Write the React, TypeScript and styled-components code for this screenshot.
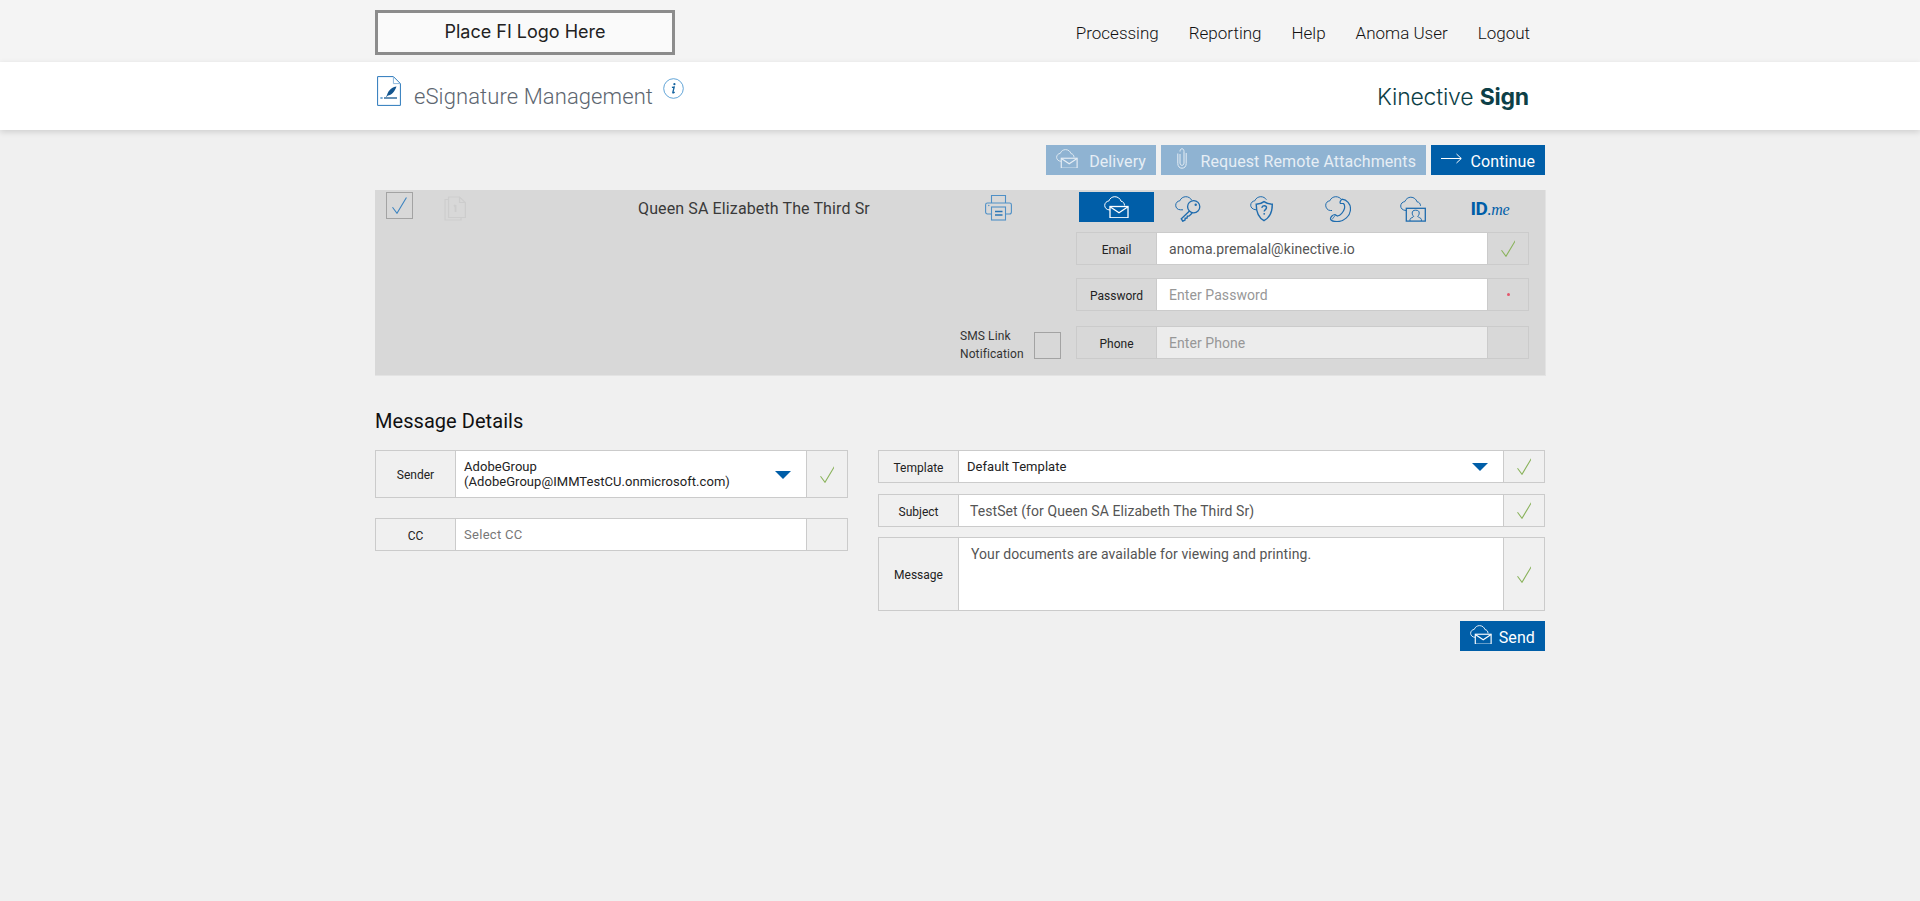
import React from 'react';
import styled, { createGlobalStyle } from 'styled-components';

const Global = createGlobalStyle`
  html, body { margin: 0; padding: 0; background: #f0f0f0; font-family: Roboto, "Liberation Sans", sans-serif; color: #333; }
  * { box-sizing: border-box; }
`;

const Page = styled.div`min-height: 901px; background: #f0f0f0;`;
const Wrap = styled.div`width: 1170px; margin: 0 auto;`;
const TopBar = styled.div`height: 62px; background: #f4f4f4;`;
const TopInner = styled(Wrap)`display: flex; justify-content: space-between; padding-right: 15px;`;
const LogoBox = styled.div`
  width: 300px; height: 45px; margin-top: 10px; border: 3px solid #8c8c8c; background: #fafafa;
  display: flex; align-items: center; justify-content: center;
  font: 400 18px Inter, sans-serif; color: #222; padding-bottom: 3px;
`;
const Nav = styled.nav`display: flex; gap: 30px; padding-top: 23px;`;
const NavLink = styled.a`font: 300 17px/20px Roboto, sans-serif; color: #111;`;
const TitleBar = styled.div`height: 68px; background: #fff; box-shadow: 0 2px 6px rgba(0,0,0,.14); position: relative;`;
const TitleInner = styled(Wrap)`display: flex; justify-content: space-between; padding-right: 16px;`;
const TitleLeft = styled.div`display: flex; align-items: flex-start; padding: 14px 0 0 2px;`;
const Title = styled.h1`margin: 8px 0 0 13px; font: 300 22px/26px Roboto, sans-serif; color: #5d6670; letter-spacing: .1px;`;
const InfoWrap = styled.span`margin: 2px 0 0 10px; display: flex;`;
const Brand = styled.div`font: 300 23px/28px Inter, sans-serif; color: #0d3f47; padding-top: 21px; letter-spacing: -.2px; b { font-weight: 700; }`;

const Actions = styled.div`display: flex; justify-content: flex-end; gap: 5px; padding-top: 15px;`;
const ActionButton = styled.button<{ $muted?: boolean; $w: number; $pl?: number }>`
  width: ${p => p.$w}px; height: 30px; border: 0; padding: 0 10px 0 ${p => p.$pl ?? 10}px; display: flex; align-items: center; justify-content: space-between;
  background: ${p => (p.$muted ? '#8fb3d2' : '#005ea8')}; color: ${p => (p.$muted ? '#e6eef5' : '#fff')};
  font: 400 16px/20px Roboto, sans-serif; letter-spacing: .1px; white-space: nowrap;
`;
const ButtonLabel = styled.span`padding-top: 4px;`;
const ButtonIcon = styled.span`display: flex; margin-top: -3px;`;

const Panel = styled.section`
  margin-top: 15px; height: 186px; background: #d8d8d8; display: flex; border-bottom: 1px solid #e3e3e3; box-shadow: 1px 0 0 #e3e3e3;
`;
const PanelLeft = styled.div`width: 701px; display: flex; flex-direction: column; justify-content: space-between;`;
const SignerRow = styled.div`display: flex; align-items: flex-start; padding: 2px 0 0 11px;`;
const Check = styled.div`
  width: 27px; height: 27px; border: 1px solid #a3a3a3; display: flex; align-items: center; justify-content: center; flex: none;
`;
const DocSlot = styled.span`margin: 2px 0 0 31px; display: flex;`;
const SignerName = styled.div`margin: 7px 0 0 172px; width: 233px; font: 400 16px/20px Roboto, sans-serif; color: #3a3a3a; white-space: nowrap; letter-spacing: .12px;`;
const PrinterSlot = styled.span`margin: 2px 0 0 114px; display: flex;`;
const SmsRow = styled.div`display: flex; justify-content: flex-end; align-items: center; gap: 10px; padding: 0 15px 12px 0;`;
const SmsLabel = styled.div`width: 64px; font: 400 12px/18px Roboto, sans-serif; color: #333; white-space: nowrap; letter-spacing: .1px;`;

const PanelRight = styled.div`width: 453px; padding-top: 2px;`;
const Tabs = styled.div`display: flex; padding-left: 3px; height: 30px; margin-bottom: 10px;`;
const Tab = styled.div<{ $active?: boolean; $pad?: number }>`
  width: 75px; height: 30px; display: flex; align-items: center; justify-content: center;
  padding: ${p => (p.$active ? 0 : 4)}px ${p => p.$pad ?? 0}px 0 0; background: ${p => (p.$active ? '#005ea8' : 'transparent')};
`;
const IdMe = styled.span`
  font: 700 19px/20px Roboto, sans-serif; color: #005ea8; letter-spacing: -.5px;
  i { font: italic 500 16px "Liberation Serif", serif; letter-spacing: -.2px; }
`;
const FieldStack = styled.div`display: flex; flex-direction: column;`;

const Row = styled.div<{ $h: number; $mt?: number }>`
  display: flex; height: ${p => p.$h}px; margin-top: ${p => p.$mt ?? 0}px; border: 1px solid #cbcbcb; flex: none;
`;
const RowLabel = styled.div`
  width: 80px; flex: none; display: flex; align-items: center; justify-content: center; padding-top: 2px;
  font: 400 12px/16px Roboto, sans-serif; color: #222; border-right: 1px solid #cbcbcb;
`;
const RowValue = styled.div<{ $pl: number; $size: number; $muted?: boolean; $off?: boolean; $top?: boolean }>`
  flex: 1; min-width: 0; display: flex; align-items: ${p => (p.$top ? 'flex-start' : 'center')}; justify-content: space-between;
  padding: ${p => (p.$top ? '9px' : '1px')} 15px 0 ${p => p.$pl}px;
  background: ${p => (p.$off ? '#ececec' : '#fff')}; color: ${p => (p.$muted ? '#979797' : '#555')};
  font: 400 ${p => p.$size}px/15px Roboto, sans-serif; letter-spacing: .07px;
`;
const SelectText = styled.div`color: #222; font: 400 13px/15px Roboto, sans-serif; letter-spacing: .05px; margin-top: -1px;`;
const SelectHint = styled.span`color: #777; font-size: 13px; letter-spacing: .3px; margin-top: -1px;`;
const Caret = styled.span`width: 0; height: 0; border-left: 8px solid transparent; border-right: 8px solid transparent; border-top: 8px solid #005ea8; flex: none;`;
const StatusCell = styled.div`
  width: 41px; flex: none; display: flex; align-items: center; justify-content: center; border-left: 1px solid #cbcbcb;
`;
const RedDot = styled.span`width: 3px; height: 3px; border-radius: 50%; background: #e4566b;`;

const Heading = styled.h2`margin: 33px 0 17px; font: 400 20px/24px Roboto, sans-serif; color: #111; letter-spacing: .05px;`;
const Columns = styled.div`display: grid; grid-template-columns: 473px 667px; gap: 30px;`;
const Column = styled.div`display: flex; flex-direction: column;`;
const SendRow = styled.div`display: flex; justify-content: flex-end; margin-top: 10px;`;

const B = '#1f6cae';
const CloudLine = ({ c = B }: { c?: string }) => (
  <path d="M6 14C2.600 14 .7 11.800.7 9.400.7 7 2.600 5.200 4.800 5 5.800 2.300 8.200.7 10.800.7c3 0 5.500 1.900 6.200 4.500 2 .2 3.500 2 3.500 4.300" fill="none" stroke={c} strokeWidth="1" />
);
const CloudMail = ({ c = '#fff', size = 25 }: { c?: string; size?: number }) => (
  <svg width={size} height={size * 0.9} viewBox="0 0 25 22.5" fill="none">
    <CloudLine c={c} />
    <rect x="6" y="10.500" width="18" height="11.300" stroke={c} strokeWidth="1.300" fill="none" />
    <path d="M6 10.800l9 6 9-6" stroke={c} strokeWidth="1.300" />
  </svg>
);
const CloudKey = () => (
  <svg width="26" height="26" viewBox="0 0 26 26" fill="none" stroke={B}>
    <path d="M8 13.800H5.500C2.500 13.800.7 11.800.7 9.200.7 6.800 2.600 5 4.800 4.800 5.800 2.300 8.200.7 10.800.7c2.600 0 4.700 1.300 5.800 3.400" strokeWidth="1" />
    <circle cx="18.700" cy="10.700" r="6.100" strokeWidth="1.300" />
    <circle cx="20.700" cy="8.800" r="1.200" fill={B} stroke="none" />
    <path d="M14.500 15L6.300 22.800l1.500 2.400 2.200-1.200.2-1.800 1.800-.2.4-1.800 1.800-.3 3-3" strokeWidth="1.400" />
  </svg>
);
const CloudShield = () => (
  <svg width="26" height="26" viewBox="0 0 26 26" fill="none" stroke={B}>
    <path d="M6 13.800C2.500 13.500.7 11.400.7 9.200.7 6.800 2.600 5 4.800 4.800 5.800 2.300 8.200.7 10.800.7c2.400 0 4.500 1.200 5.600 3" strokeWidth="1" />
    <path d="M6.200 8.200c3 0 5.600-.8 7.800-2.600 2.400 1.800 5 2.600 8.300 2.600 0 6.800-1.300 12.800-8.300 16.400C7.400 21 6.200 15 6.200 8.200z" strokeWidth="1.400" />
    <path d="M11.800 11.800c.2-1.300 1.200-2 2.400-2 1.300 0 2.300.8 2.300 2 0 1.800-2.300 1.800-2.300 3.700" strokeWidth="1.400" />
    <circle cx="14.200" cy="17.800" r=".9" fill={B} stroke="none" />
  </svg>
);
const CloudPhone = () => (
  <svg width="26" height="26" viewBox="0 0 26 26" fill="none" stroke={B}>
    <path d="M7 14.500H5.500C2.500 14.500.7 11.800.7 9.200.7 6.800 2.600 5 4.800 4.800 5.800 2.300 8.200.7 10.800.7c2.500 0 4.500 1.200 5.600 2.800" strokeWidth="1" />
    <path d="M17 3.200C22 3.800 25.500 8 25.500 13 25.500 20 19 25.600 12 25.600 9 25.600 6 25 5.500 23 5.300 21 8 18.500 10 18.500L12.500 20C15.500 19.500 18.500 16 19.500 12.500 20 10 19.500 8.500 18.500 7.500L15.500 7.500C14.500 6.500 15.500 4 17 3.200Z" strokeWidth="1.200" />
    <path d="M10.500 19L7 23.500" strokeWidth=".8" />
  </svg>
);
const CloudCard = () => (
  <svg width="26" height="26" viewBox="0 0 26 26" fill="none" stroke={B}>
    <path d="M6 14.500C2.600 14.300.7 12.400.7 10 .7 7.600 2.600 5.800 4.800 5.600 5.800 3 8.200 1.200 10.800 1.200c3 0 5.500 2 6.200 4.600 2 .2 3.500 1.800 3.500 4" strokeWidth="1" />
    <rect x="6.300" y="12.300" width="19" height="12.800" strokeWidth="1.300" />
    <path d="M10 25v-1.500c0-1.700 3.500-2 3.700-3.200-1-.8-1.500-2-1.500-3.300 0-1.800 1-2.800 3.500-2.800s3.500 1 3.500 2.800c0 1.300-.5 2.500-1.500 3.300.2 1.200 3.700 1.500 3.700 3.200V25" strokeWidth="1" />
  </svg>
);
const Printer = () => (
  <svg width="27" height="27" viewBox="0 0 27 27" fill="none" stroke="#4f90c6" strokeWidth="1.100">
    <path d="M6.500 9V1.500h14V9" />
    <path d="M6.500 20H2.500C1.400 20 .6 19 .6 18V10.800C.6 9.700 1.400 9 2.500 9h22c1.100 0 1.900.7 1.900 1.800V18c0 1-.8 2-1.900 2h-4" />
    <rect x="6.500" y="13" width="14" height="13" />
    <path d="M10 17.500h7.500M10 21h7.500" strokeWidth="1.400" stroke="#2a75b5" />
    <circle cx="3.800" cy="11.500" r=".7" fill="#4f90c6" stroke="none" />
  </svg>
);
const DocPen = () => (
  <svg width="24" height="30" viewBox="0 0 24 30" fill="none">
    <path d="M.6.6h15.800l7 7v21.800H.6z" stroke="#2a78bb" strokeWidth="1" />
    <path d="M16.400.6v7h7" stroke="#8db8dc" strokeWidth="1" />
    <path d="M19.500 10.500c-4 .6-8 3.200-9.500 8.500l-1.300 2.500 2.300-2c3.400-.5 6.500-3.200 8.500-9z" fill="#13558f" />
    <path d="M7 22h13" stroke="#13558f" strokeWidth="1.300" />
    <path d="M3.500 21l2 2M5.500 21l-2 2" stroke="#2a78bb" strokeWidth=".8" />
  </svg>
);
const Info = () => (
  <svg width="21" height="21" viewBox="0 0 21 21" fill="none">
    <circle cx="10.500" cy="10.500" r="9.800" stroke="#4f9ad2" strokeWidth=".9" />
    <circle cx="11.400" cy="6.200" r="1.100" fill="#14639f" />
    <path d="M8.900 9.400l2.300-.4-1.400 5.500c-.1.700.6.700 1.800-.4" stroke="#14639f" strokeWidth="1.300" fill="none" />
  </svg>
);
const Clip = () => (
  <svg width="10" height="21" viewBox="0 0 10 21" fill="none" stroke="#e6eef5" strokeWidth="1">
    <path d="M3 6v9c0 1.500.8 2.300 2 2.300s2-.8 2-2.300V3.500C7 1.800 6.200.8 5 .8S3 1.800 3 3.500" />
    <path d="M.8 5.500v10c0 2.900 1.800 4.700 4.200 4.700s4.200-1.800 4.200-4.700V5" />
  </svg>
);
const Arrow = () => (
  <svg width="21" height="11" viewBox="0 0 21 11" fill="none" stroke="#fff" strokeWidth="1">
    <path d="M0 5.500h20M15.500 1l4.800 4.500L15.500 10" />
  </svg>
);
const Tick = ({ c = '#8ab35c', s = 17 }: { c?: string; s?: number }) => (
  <svg width={s * 0.88} height={s} viewBox="0 0 15 17" fill="none" stroke={c}>
    <path d="M.5 10.300L5 16.300 14.500.5" strokeWidth="1.100" />
  </svg>
);
const SmallDoc = () => (
  <svg width="22" height="27" viewBox="0 0 22 27" fill="none" stroke="#cdcdcd" strokeWidth="1.200">
    <path d="M4.500 3h11l5.800 5.500V23.500H4.500z" />
    <path d="M4.500 5.500H1v20.500h16v-2.500" />
    <path d="M15.500 3v5.500h5.800" />
    <path d="M11.500 11v7M10 12.500l1.500-1.500" strokeWidth="1.800" />
  </svg>
);

export default function App() {
  return (
    <Page>
      <Global />
      <TopBar>
        <TopInner>
          <LogoBox>Place FI Logo Here</LogoBox>
          <Nav>
            {['Processing', 'Reporting', 'Help', 'Anoma User', 'Logout'].map(n => <NavLink key={n}>{n}</NavLink>)}
          </Nav>
        </TopInner>
      </TopBar>
      <TitleBar>
        <TitleInner>
          <TitleLeft>
            <DocPen />
            <Title>eSignature Management</Title>
            <InfoWrap><Info /></InfoWrap>
          </TitleLeft>
          <Brand>Kinective <b>Sign</b></Brand>
        </TitleInner>
      </TitleBar>
      <Wrap>
        <Actions>
          <ActionButton $muted $w={110}><ButtonIcon><CloudMail c="#e6eef5" size={22} /></ButtonIcon><ButtonLabel>Delivery</ButtonLabel></ActionButton>
          <ActionButton $muted $w={265} $pl={16}><ButtonIcon><Clip /></ButtonIcon><ButtonLabel>Request Remote Attachments</ButtonLabel></ActionButton>
          <ActionButton $w={114}><ButtonIcon><Arrow /></ButtonIcon><ButtonLabel>Continue</ButtonLabel></ActionButton>
        </Actions>
        <Panel>
          <PanelLeft>
            <SignerRow>
              <Check><Tick c="#3d84c0" s={17} /></Check>
              <DocSlot><SmallDoc /></DocSlot>
              <SignerName>Queen SA Elizabeth The Third Sr</SignerName>
              <PrinterSlot><Printer /></PrinterSlot>
            </SignerRow>
            <SmsRow>
              <SmsLabel>SMS Link<br />Notification</SmsLabel>
              <Check />
            </SmsRow>
          </PanelLeft>
          <PanelRight>
            <Tabs>
              <Tab $active><CloudMail /></Tab>
              <Tab $pad={8}><CloudKey /></Tab>
              <Tab $pad={8}><CloudShield /></Tab>
              <Tab $pad={8}><CloudPhone /></Tab>
              <Tab $pad={8}><CloudCard /></Tab>
              <Tab $pad={3}><IdMe>ID<i>.me</i></IdMe></Tab>
            </Tabs>
            <FieldStack>
              <Row $h={33}>
                <RowLabel>Email</RowLabel>
                <RowValue $pl={12} $size={14}>anoma.premalal@kinective.io</RowValue>
                <StatusCell><Tick /></StatusCell>
              </Row>
              <Row $h={33} $mt={13}>
                <RowLabel>Password</RowLabel>
                <RowValue $pl={12} $size={14} $muted>Enter Password</RowValue>
                <StatusCell><RedDot /></StatusCell>
              </Row>
              <Row $h={33} $mt={15}>
                <RowLabel>Phone</RowLabel>
                <RowValue $pl={12} $size={14} $muted $off>Enter Phone</RowValue>
                <StatusCell />
              </Row>
            </FieldStack>
          </PanelRight>
        </Panel>
        <Heading>Message Details</Heading>
        <Columns>
          <Column>
            <Row $h={48}>
              <RowLabel>Sender</RowLabel>
              <RowValue $pl={8} $size={13}>
                <SelectText>AdobeGroup<br />(AdobeGroup@IMMTestCU.onmicrosoft.com)</SelectText>
                <Caret />
              </RowValue>
              <StatusCell><Tick /></StatusCell>
            </Row>
            <Row $h={33} $mt={20}>
              <RowLabel>CC</RowLabel>
              <RowValue $pl={8} $size={13}><SelectHint>Select CC</SelectHint></RowValue>
              <StatusCell />
            </Row>
          </Column>
          <Column>
            <Row $h={33}>
              <RowLabel>Template</RowLabel>
              <RowValue $pl={8} $size={13}>
                <SelectText>Default Template</SelectText>
                <Caret />
              </RowValue>
              <StatusCell><Tick /></StatusCell>
            </Row>
            <Row $h={33} $mt={11}>
              <RowLabel>Subject</RowLabel>
              <RowValue $pl={11} $size={14}>TestSet (for Queen SA Elizabeth The Third Sr)</RowValue>
              <StatusCell><Tick /></StatusCell>
            </Row>
            <Row $h={74} $mt={10}>
              <RowLabel>Message</RowLabel>
              <RowValue $pl={12} $size={14} $top>Your documents are available for viewing and printing.</RowValue>
              <StatusCell><Tick /></StatusCell>
            </Row>
            <SendRow>
              <ActionButton $w={85}><ButtonIcon><CloudMail size={22} /></ButtonIcon><ButtonLabel>Send</ButtonLabel></ActionButton>
            </SendRow>
          </Column>
        </Columns>
      </Wrap>
    </Page>
  );
}
